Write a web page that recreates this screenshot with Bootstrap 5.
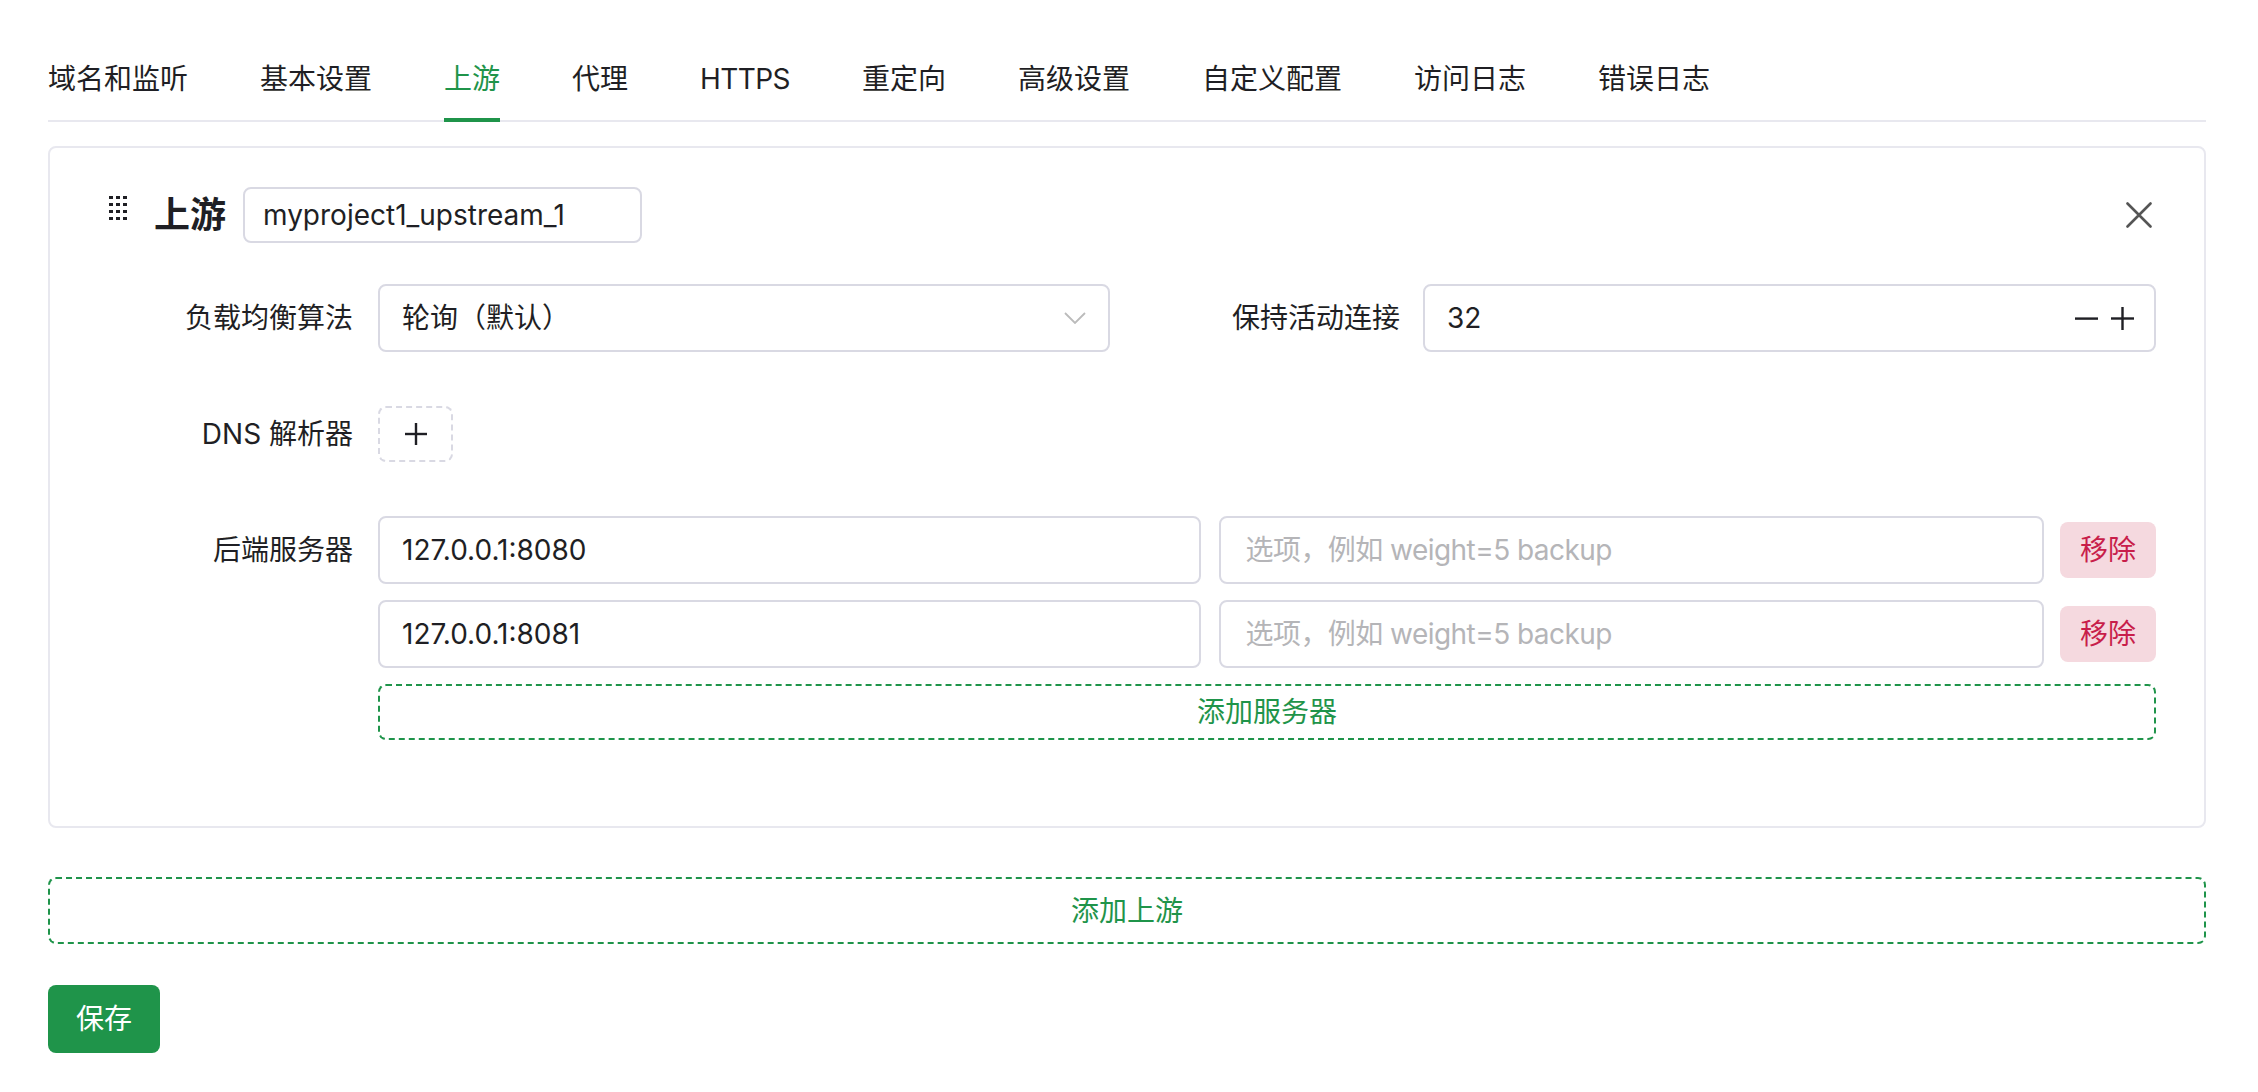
<!DOCTYPE html>
<html lang="zh">
<head>
  <meta charset="utf-8">
  <title>上游</title>
  <link href="https://cdn.jsdelivr.net/npm/bootstrap@5.3.0/dist/css/bootstrap.min.css" rel="stylesheet">
  <style>
    body {
      font-family: Inter, "Noto Sans CJK SC", sans-serif;
      font-size: 28px;
      color: #1f1f24;
      background: #fff;
    }
    .page-wrap { padding: 48px 52px 38px 48px; }

    .tab-bar { border-bottom: 2px solid #e8e8ef; gap: 72px; height: 74px; }
    .tab-item { color: #1f1f24; height: 74px; line-height: 62px; text-decoration: none; margin-bottom: -2px; }
    .tab-item.on { color: #1f944a; border-bottom: 4px solid #1f944a; }
    .tab-latin { letter-spacing: -0.6px; }

    .upstream-box { margin-top: 24px; height: 682px; border: 2px solid #e8e8ef; border-radius: 8px; padding: 39px 48px 0 59px; }
    .head-row { height: 56px; }
    .drag-dots { width: 18px; height: 24px; margin-top: -14px; margin-right: 27px; flex-shrink: 0; }
    .box-title { font-size: 36px; font-weight: 600; margin-right: 17px; }
    .name-input { width: 399px; }
    .close-btn { width: 26px; height: 26px; margin-right: 4px; padding: 0; border: 0; background: none; }

    .field {
      height: 56px;
      border: 2px solid #d9d9e3;
      border-radius: 8px;
      color: #1f1f24;
      font-size: 28px;
      padding: 0 18px;
      box-shadow: none;
    }
    .field::placeholder { color: #b5b5b8; opacity: 1; letter-spacing: -0.55px; }
    .field.tall { flex: 1 1 0; height: 68px; padding: 0 22px; }
    .field.tall.option-input { margin-left: 18px; padding-left: 25px; }
    select.field.tall {
      padding-right: 60px;
      background-image: url("data:image/svg+xml,%3csvg xmlns='http://www.w3.org/2000/svg' viewBox='0 0 22 12'%3e%3cpath fill='none' stroke='%23bbbbbb' stroke-width='1.8' d='M1 1l10 10L21 1'/%3e%3c/svg%3e");
      background-size: 22px 12px;
      background-position: right 22px center;
    }

    .form-rows { margin-left: -11px; margin-top: 41px; }
    .lbl { width: 280px; padding-right: 25px; margin: 0; text-align: right; flex-shrink: 0; }
    .lbl-2 { width: 313px; padding-right: 23px; margin: 0; text-align: right; flex-shrink: 0; }
    .step-wrap { flex: 0 0 733px; height: 68px; padding: 0 20px 0 22px; border: 2px solid #d9d9e3; border-radius: 8px; }
    .step-val { border: 0; outline: 0; width: 200px; font-size: 28px; color: #1f1f24; padding: 0; }
    .step-btn { padding: 0; border: 0; background: none; line-height: 0; }
    .step-plus { margin-left: 13px; }
    .dns-row { margin-top: 54px; }
    .dns-add { width: 75px; height: 56px; border: 2px dashed #d9d9e3; border-radius: 8px; background: none; padding: 0; }
    .server-row { margin-top: 54px; }
    .server-lbl { line-height: 68px; }
    .remove-btn { width: 96px; height: 56px; background: #f5d9df; color: #c81e4a; border: 0; border-radius: 8px; font-size: 28px; padding: 0; flex-shrink: 0; }
    .dash-btn { height: 56px; border: 2px dashed #1f944a; border-radius: 8px; background: none; color: #1f944a; font-size: 28px; padding: 0; line-height: 1; }
    .add-upstream { height: 67px; margin-top: 49px; }
    .save-btn { display: block; margin-top: 41px; width: 112px; height: 68px; background: #1f944a; border: 0; border-radius: 8px; color: #fff; font-size: 28px; padding: 0; }
  </style>
</head>
<body>
  <div class="page-wrap">
    <nav class="d-flex tab-bar">
      <a class="tab-item" href="#">域名和监听</a>
      <a class="tab-item" href="#">基本设置</a>
      <a class="tab-item on" href="#">上游</a>
      <a class="tab-item" href="#">代理</a>
      <a class="tab-item tab-latin" href="#">HTTPS</a>
      <a class="tab-item" href="#">重定向</a>
      <a class="tab-item" href="#">高级设置</a>
      <a class="tab-item" href="#">自定义配置</a>
      <a class="tab-item" href="#">访问日志</a>
      <a class="tab-item" href="#">错误日志</a>
    </nav>

    <div class="upstream-box">
      <div class="d-flex align-items-center head-row">
        <svg class="drag-dots" viewBox="0 0 18 24" fill="#1f1f24">
          <rect x="0" y="0" width="4" height="3"/><rect x="7" y="0" width="4" height="3"/><rect x="14" y="0" width="4" height="3"/>
          <rect x="0" y="7" width="4" height="3"/><rect x="7" y="7" width="4" height="3"/><rect x="14" y="7" width="4" height="3"/>
          <rect x="0" y="14" width="4" height="3"/><rect x="7" y="14" width="4" height="3"/><rect x="14" y="14" width="4" height="3"/>
          <rect x="0" y="21" width="4" height="3"/><rect x="7" y="21" width="4" height="3"/><rect x="14" y="21" width="4" height="3"/>
        </svg>
        <span class="box-title">上游</span>
        <input class="form-control field name-input" value="myproject1_upstream_1">
        <button class="close-btn ms-auto" type="button">
          <svg class="d-block" width="26" height="26" viewBox="0 0 26 26" fill="none" stroke="#555" stroke-width="2.6" stroke-linecap="round"><path d="M1.5 1.5L24.5 24.5M24.5 1.5L1.5 24.5"/></svg>
        </button>
      </div>

      <div class="form-rows">
        <div class="d-flex align-items-center">
          <label class="lbl">负载均衡算法</label>
          <select class="form-select field tall"><option>轮询（默认）</option></select>
          <label class="lbl-2">保持活动连接</label>
          <div class="d-flex align-items-center step-wrap">
            <input class="step-val" value="32">
            <div class="d-flex align-items-center ms-auto">
              <button class="step-btn" type="button"><svg width="23" height="3" fill="#1f1f24"><rect y="0.4" width="23" height="2.4"/></svg></button>
              <button class="step-btn step-plus" type="button"><svg width="23" height="23" viewBox="0 0 23 23" fill="#1f1f24"><rect y="10.3" width="23" height="2.4"/><rect x="10.3" width="2.4" height="23"/></svg></button>
            </div>
          </div>
        </div>

        <div class="d-flex align-items-center dns-row">
          <label class="lbl">DNS 解析器</label>
          <button class="dns-add" type="button"><svg class="d-block mx-auto" width="22" height="22" viewBox="0 0 22 22" fill="#1f1f24"><rect y="9.8" width="22" height="2.4"/><rect x="9.8" width="2.4" height="22"/></svg></button>
        </div>

        <div class="d-flex server-row">
          <label class="lbl server-lbl">后端服务器</label>
          <div class="d-flex flex-column flex-grow-1">
            <div class="d-flex align-items-center">
              <input class="form-control field tall" value="127.0.0.1:8080">
              <input class="form-control field tall option-input" placeholder="选项，例如 weight=5 backup">
              <button class="remove-btn ms-3" type="button">移除</button>
            </div>
            <div class="d-flex align-items-center mt-3">
              <input class="form-control field tall" value="127.0.0.1:8081">
              <input class="form-control field tall option-input" placeholder="选项，例如 weight=5 backup">
              <button class="remove-btn ms-3" type="button">移除</button>
            </div>
            <button class="dash-btn w-100 mt-3" type="button">添加服务器</button>
          </div>
        </div>
      </div>
    </div>

    <button class="dash-btn add-upstream w-100" type="button">添加上游</button>
    <button class="save-btn" type="button">保存</button>
  </div>
</body>
</html>
